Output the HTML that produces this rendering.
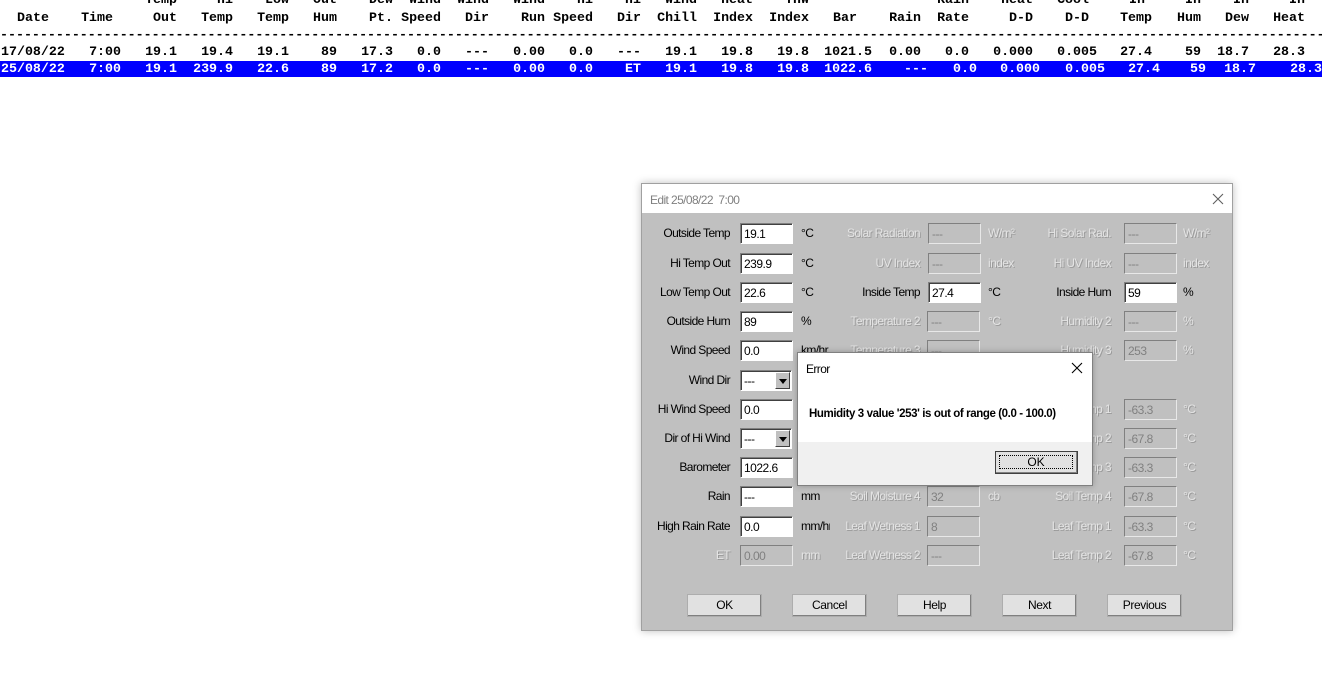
<!DOCTYPE html>
<html><head><meta charset="utf-8"><style>
*{margin:0;padding:0;box-sizing:border-box}
body{width:1322px;height:674px;background:#fff;position:relative;overflow:hidden;font-family:"Liberation Sans",sans-serif}
.m{position:absolute;font:bold 13.3px "Liberation Mono",monospace;white-space:nowrap;line-height:16px;color:#000;height:16px}
.m span{position:absolute;top:0}
#sel{position:absolute;left:0;top:61px;width:1322px;height:16px;background:#0000ff}
.d{position:absolute;left:641px;top:183px;width:592px;height:448px;background:#c0c0c0;border:1px solid #a0a0a0;box-shadow:0 0 8px rgba(0,0,0,.25)}
.t{position:absolute;font-size:12px;white-space:nowrap;line-height:14px;color:#000;letter-spacing:-.6px}
.lab{text-align:right;width:120px}
.dis{color:#e4e4e4;text-shadow:1px 1px 0 #9a9a9a}
.in{position:absolute;width:53px;height:21px;background:#fff;border:1px solid;border-color:#808080 #fff #fff #808080;box-shadow:inset 1px 1px 0 #404040;font-size:12px;padding:3px 0 0 3px;letter-spacing:-.5px;line-height:14px}
.in.x{background:#c0c0c0;color:#808080;box-shadow:none;border-color:#808080 #e8e8e8 #e8e8e8 #808080}
.dd{position:absolute;right:1px;top:1px;width:15px;height:17px;background:#c0c0c0;border:1px solid;border-color:#fff #404040 #404040 #fff}
.dd:after{content:"";position:absolute;left:3px;top:6px;border:4px solid transparent;border-top:5px solid #000;border-bottom:0}
.b{position:absolute;width:75px;height:23px;background:#e1e1e1;border:1px solid #adadad;box-shadow:inset -1px -1px 0 #808080;font-size:12px;text-align:center;line-height:21px;letter-spacing:-.4px}
</style></head><body>
<div id="sel"></div>
<div class="m" style="left:0;top:-8px;width:1322px"><span style="right:1145px">Temp</span><span style="right:1089px">Hi</span><span style="right:1033px">Low</span><span style="right:985px">Out</span><span style="right:929px">Dew</span><span style="right:881px">Wind</span><span style="right:833px">Wind</span><span style="right:777px">Wind</span><span style="right:729px">Hi</span><span style="right:681px">Hi</span><span style="right:625px">Wind</span><span style="right:569px">Heat</span><span style="right:513px">THW</span><span style="right:353px">Rain</span><span style="right:289px">Heat</span><span style="right:233px">Cool</span><span style="right:177px">In</span><span style="right:121px">In</span><span style="right:73px">In</span><span style="right:17px">In</span></div>
<div class="m" style="left:0;top:10px;width:1322px"><span style="left:17px">Date</span><span style="right:1209px">Time</span><span style="right:1145px">Out</span><span style="right:1089px">Temp</span><span style="right:1033px">Temp</span><span style="right:985px">Hum</span><span style="right:929px">Pt.</span><span style="right:881px">Speed</span><span style="right:833px">Dir</span><span style="right:777px">Run</span><span style="right:729px">Speed</span><span style="right:681px">Dir</span><span style="right:625px">Chill</span><span style="right:569px">Index</span><span style="right:513px">Index</span><span style="right:465px">Bar</span><span style="right:401px">Rain</span><span style="right:353px">Rate</span><span style="right:289px">D-D</span><span style="right:233px">D-D</span><span style="right:170px">Temp</span><span style="right:121px">Hum</span><span style="right:73px">Dew</span><span style="right:17px">Heat</span></div>
<div class="m" style="left:0;top:27px;width:1322px;overflow:hidden">-------------------------------------------------------------------------------------------------------------------------------------------------------------------------</div>
<div class="m" style="left:0;top:44px;width:1322px"><span style="left:1px">17/08/22</span><span style="right:1201px">7:00</span><span style="right:1145px">19.1</span><span style="right:1089px">19.4</span><span style="right:1033px">19.1</span><span style="right:985px">89</span><span style="right:929px">17.3</span><span style="right:881px">0.0</span><span style="right:833px">---</span><span style="right:777px">0.00</span><span style="right:729px">0.0</span><span style="right:681px">---</span><span style="right:625px">19.1</span><span style="right:569px">19.8</span><span style="right:513px">19.8</span><span style="right:450px">1021.5</span><span style="right:401px">0.00</span><span style="right:353px">0.0</span><span style="right:289px">0.000</span><span style="right:225px">0.005</span><span style="right:170px">27.4</span><span style="right:121px">59</span><span style="right:73px">18.7</span><span style="right:17px">28.3</span></div>
<div class="m" style="left:0;top:61px;width:1322px;color:#fff"><span style="left:1px">25/08/22</span><span style="right:1201px">7:00</span><span style="right:1145px">19.1</span><span style="right:1089px">239.9</span><span style="right:1033px">22.6</span><span style="right:985px">89</span><span style="right:929px">17.2</span><span style="right:881px">0.0</span><span style="right:833px">---</span><span style="right:777px">0.00</span><span style="right:729px">0.0</span><span style="right:681px">ET</span><span style="right:625px">19.1</span><span style="right:569px">19.8</span><span style="right:513px">19.8</span><span style="right:450px">1022.6</span><span style="right:394px">---</span><span style="right:345px">0.0</span><span style="right:282px">0.000</span><span style="right:217px">0.005</span><span style="right:162px">27.4</span><span style="right:116px">59</span><span style="right:66px">18.7</span><span style="right:0px">28.3</span></div>

<div class="d">
<div style="position:absolute;left:0;top:0;width:590px;height:29px;background:#fff"></div>
<div class="t" style="left:8px;top:9px;color:#808080">Edit 25/08/22&nbsp; 7:00</div>
<svg style="position:absolute;left:570px;top:9px" width="12" height="12"><path d="M1 1L11 11M11 1L1 11" stroke="#606060" stroke-width="1.1"/></svg>
</div>

<div class="t lab" style="left:610px;top:226px">Outside Temp</div><div class="in" style="left:740px;top:223px">19.1</div><div class="t" style="left:801px;top:226px">°C</div>
<div class="t lab" style="left:610px;top:256px">Hi Temp Out</div><div class="in" style="left:740px;top:253px">239.9</div><div class="t" style="left:801px;top:256px">°C</div>
<div class="t lab" style="left:610px;top:285px">Low Temp Out</div><div class="in" style="left:740px;top:282px">22.6</div><div class="t" style="left:801px;top:285px">°C</div>
<div class="t lab" style="left:610px;top:314px">Outside Hum</div><div class="in" style="left:740px;top:311px">89</div><div class="t" style="left:801px;top:314px">%</div>
<div class="t lab" style="left:610px;top:343px">Wind Speed</div><div class="in" style="left:740px;top:340px">0.0</div><div class="t" style="left:801px;top:343px">km/hr</div>
<div class="t lab" style="left:610px;top:373px">Wind Dir</div><div class="in" style="left:740px;top:370px;width:52px">---<div class="dd"></div></div>
<div class="t lab" style="left:610px;top:402px">Hi Wind Speed</div><div class="in" style="left:740px;top:399px">0.0</div>
<div class="t lab" style="left:610px;top:431px">Dir of Hi Wind</div><div class="in" style="left:740px;top:428px;width:52px">---<div class="dd"></div></div>
<div class="t lab" style="left:610px;top:460px">Barometer</div><div class="in" style="left:740px;top:457px">1022.6</div>
<div class="t lab" style="left:610px;top:489px">Rain</div><div class="in" style="left:740px;top:486px">---</div><div class="t" style="left:801px;top:489px">mm</div>
<div class="t lab" style="left:610px;top:519px">High Rain Rate</div><div class="in" style="left:740px;top:516px">0.0</div><div class="t" style="left:801px;top:519px;width:29px;overflow:hidden">mm/hr</div>
<div class="t lab dis" style="left:610px;top:548px">ET</div><div class="in x" style="left:740px;top:545px">0.00</div><div class="t dis" style="left:801px;top:548px">mm</div>

<div class="t lab dis" style="left:800px;top:226px">Solar Radiation</div><div class="in x" style="left:928px;top:223px">---</div><div class="t dis" style="left:988px;top:226px">W/m²</div>
<div class="t lab dis" style="left:800px;top:256px">UV Index</div><div class="in x" style="left:928px;top:253px">---</div><div class="t dis" style="left:988px;top:256px">index</div>
<div class="t lab" style="left:800px;top:285px">Inside Temp</div><div class="in" style="left:928px;top:282px">27.4</div><div class="t" style="left:988px;top:285px">°C</div>
<div class="t lab dis" style="left:800px;top:314px">Temperature 2</div><div class="in x" style="left:927px;top:311px">---</div><div class="t dis" style="left:988px;top:314px">°C</div>
<div class="t lab dis" style="left:800px;top:343px">Temperature 3</div><div class="in x" style="left:927px;top:340px">---</div>
<div class="t lab dis" style="left:800px;top:489px">Soil Moisture 4</div><div class="in x" style="left:927px;top:486px">32</div><div class="t dis" style="left:988px;top:489px">cb</div>
<div class="t lab dis" style="left:800px;top:519px">Leaf Wetness 1</div><div class="in x" style="left:927px;top:516px">8</div>
<div class="t lab dis" style="left:800px;top:548px">Leaf Wetness 2</div><div class="in x" style="left:927px;top:545px">---</div>

<div class="t lab dis" style="left:991px;top:226px">Hi Solar Rad.</div><div class="in x" style="left:1124px;top:223px">---</div><div class="t dis" style="left:1183px;top:226px">W/m²</div>
<div class="t lab dis" style="left:991px;top:256px">Hi UV Index</div><div class="in x" style="left:1124px;top:253px">---</div><div class="t dis" style="left:1183px;top:256px">index</div>
<div class="t lab" style="left:991px;top:285px">Inside Hum</div><div class="in" style="left:1124px;top:282px">59</div><div class="t" style="left:1183px;top:285px">%</div>
<div class="t lab dis" style="left:991px;top:314px">Humidity 2</div><div class="in x" style="left:1124px;top:311px">---</div><div class="t dis" style="left:1183px;top:314px">%</div>
<div class="t lab dis" style="left:991px;top:343px">Humidity 3</div><div class="in x" style="left:1124px;top:340px">253</div><div class="t dis" style="left:1183px;top:343px">%</div>
<div class="t lab dis" style="left:991px;top:402px">Soil Temp 1</div><div class="in x" style="left:1124px;top:399px">-63.3</div><div class="t dis" style="left:1183px;top:402px">°C</div>
<div class="t lab dis" style="left:991px;top:431px">Soil Temp 2</div><div class="in x" style="left:1124px;top:428px">-67.8</div><div class="t dis" style="left:1183px;top:431px">°C</div>
<div class="t lab dis" style="left:991px;top:460px">Soil Temp 3</div><div class="in x" style="left:1124px;top:457px">-63.3</div><div class="t dis" style="left:1183px;top:460px">°C</div>
<div class="t lab dis" style="left:991px;top:489px">Soil Temp 4</div><div class="in x" style="left:1124px;top:486px">-67.8</div><div class="t dis" style="left:1183px;top:489px">°C</div>
<div class="t lab dis" style="left:991px;top:519px">Leaf Temp 1</div><div class="in x" style="left:1124px;top:516px">-63.3</div><div class="t dis" style="left:1183px;top:519px">°C</div>
<div class="t lab dis" style="left:991px;top:548px">Leaf Temp 2</div><div class="in x" style="left:1124px;top:545px">-67.8</div><div class="t dis" style="left:1183px;top:548px">°C</div>

<div class="b" style="left:687px;top:594px">OK</div>
<div class="b" style="left:792px;top:594px">Cancel</div>
<div class="b" style="left:897px;top:594px">Help</div>
<div class="b" style="left:1002px;top:594px">Next</div>
<div class="b" style="left:1107px;top:594px">Previous</div>

<div style="position:absolute;left:797px;top:352px;width:296px;height:134px;background:#f0f0f0;border:1px solid #808080;box-shadow:0 0 6px rgba(0,0,0,.25)">
<div style="position:absolute;left:0;top:0;width:294px;height:89px;background:#fff"></div>
<div class="t" style="left:8px;top:9px">Error</div>
<svg style="position:absolute;left:273px;top:9px" width="12" height="12"><path d="M1 1L11 11M11 1L1 11" stroke="#000" stroke-width="1.1"/></svg>
<div class="t" style="left:11px;top:54px;font-weight:bold;font-size:11.5px;letter-spacing:-.4px">Humidity 3 value '253' is out of range (0.0 - 100.0)</div>
<div style="position:absolute;left:197px;top:98px;width:83px;height:23px;background:#e1e1e1;border:1px solid #404040;box-shadow:inset -1px -1px 0 #808080">
<div style="position:absolute;left:3px;top:3px;right:4px;bottom:4px;border:1px dotted #000;font-size:12px;text-align:center;line-height:13px">OK</div></div>
</div>
</body></html>
